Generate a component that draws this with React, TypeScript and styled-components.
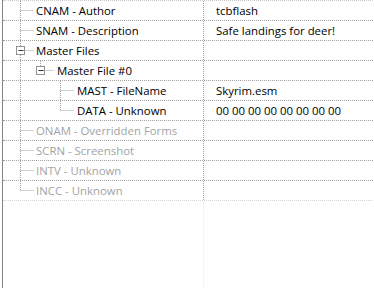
import { FC } from 'react';
import styled, { createGlobalStyle } from 'styled-components';

type Node = {
  name: string;
  value?: string;
  level: number;
  rails: number[];
  last?: boolean;
  expanded?: boolean;
  disabled?: boolean;
};

const rows: Node[] = [
  { name: 'CNAM - Author', value: 'tcbflash', level: 0, rails: [] },
  { name: 'SNAM - Description', value: 'Safe landings for deer!', level: 0, rails: [] },
  { name: 'Master Files', level: 0, rails: [], expanded: true },
  { name: 'Master File #0', level: 1, rails: [0], expanded: true, last: true },
  { name: 'MAST - FileName', value: 'Skyrim.esm', level: 2, rails: [0] },
  { name: 'DATA - Unknown', value: '00 00 00 00 00 00 00 00', level: 2, rails: [0], last: true },
  { name: 'ONAM - Overridden Forms', level: 0, rails: [], disabled: true },
  { name: 'SCRN - Screenshot', level: 0, rails: [], disabled: true },
  { name: 'INTV - Unknown', level: 0, rails: [], disabled: true },
  { name: 'INCC - Unknown', level: 0, rails: [], disabled: true, last: true },
];

const ROW_H = 19;
const lineX = (level: number) => 17 + level * 20 + 0.5;

// tree connector lines for one row
const Guides: FC<{ node: Node }> = ({ node }) => {
  const { level, rails, last, expanded } = node;
  const x = lineX(level);
  const mid = 9.5;
  const width = 33 + level * 20 + (level > 0 ? 1 : 0);
  return (
    <GuideSvg width={width} height={ROW_H}>
      <g stroke="#a0a0a0" strokeDasharray="1 1" strokeWidth="1">
        {rails.map((r) => (
          <line key={r} x1={lineX(r)} y1={0} x2={lineX(r)} y2={ROW_H} />
        ))}
        <line x1={x} y1={0} x2={x} y2={last ? mid : ROW_H} />
        <line x1={x} y1={mid} x2={x + 13} y2={mid} />
      </g>
      {expanded && (
        <g>
          <rect x={x - 4} y={5.5} width={8} height={8} fill="#fff" stroke="#919191" />
          <line x1={x - 2} y1={mid} x2={x + 3} y2={mid} stroke="#333" />
        </g>
      )}
    </GuideSvg>
  );
};

const App: FC = () => {
  return (
    <>
      <GlobalStyle />
      <Frame>
        <Tree>
          {rows.map((node) => (
            <Row key={node.name}>
              <NameCell $disabled={node.disabled}>
                <Guides node={node} />
                <Label>{node.name}</Label>
              </NameCell>
              <ValueCell>{node.value}</ValueCell>
            </Row>
          ))}
          <Filler />
        </Tree>
      </Frame>
    </>
  );
};

// Styles
const GlobalStyle = createGlobalStyle`
  html, body {
    margin: 0;
    padding: 0;
    background: #fff;
  }
`;

const Frame = styled.div`
  width: 372px;
  height: 288px;
  margin-left: 2px;
  border-left: 1px solid #828282;
  background: #fff;
  overflow: hidden;
  font-family: 'Open Sans', 'Noto Sans', sans-serif;
  font-size: 11.4px;
  color: #000;
`;

const Tree = styled.div`
  display: flex;
  flex-direction: column;
  height: 100%;
  border-top: 1px dotted #c8c8c8;
`;

const Row = styled.div`
  display: grid;
  grid-template-columns: 201px 1fr;
  height: 20px;
  box-sizing: border-box;
  border-bottom: 1px dotted #a0a0a0;
  &:nth-last-child(2) {
    border-bottom-color: #d4d4d4;
  }
`;

const NameCell = styled.div<{ $disabled?: boolean }>`
  display: flex;
  align-items: center;
  border-right: 1px dotted #a0a0a0;
  color: ${(p) => (p.$disabled ? '#a3a3a3' : '#000')};
  white-space: nowrap;
  overflow: hidden;
`;

const GuideSvg = styled.svg`
  flex: none;
  display: block;
`;

const Label = styled.span`
  line-height: 19px;
`;

const ValueCell = styled.div`
  display: flex;
  align-items: center;
  padding-left: 12px;
  white-space: nowrap;
  overflow: hidden;
`;

const Filler = styled.div`
  flex: 1;
  width: 201px;
  box-sizing: border-box;
  border-right: 1px dotted #ececec;
`;

export default App;
